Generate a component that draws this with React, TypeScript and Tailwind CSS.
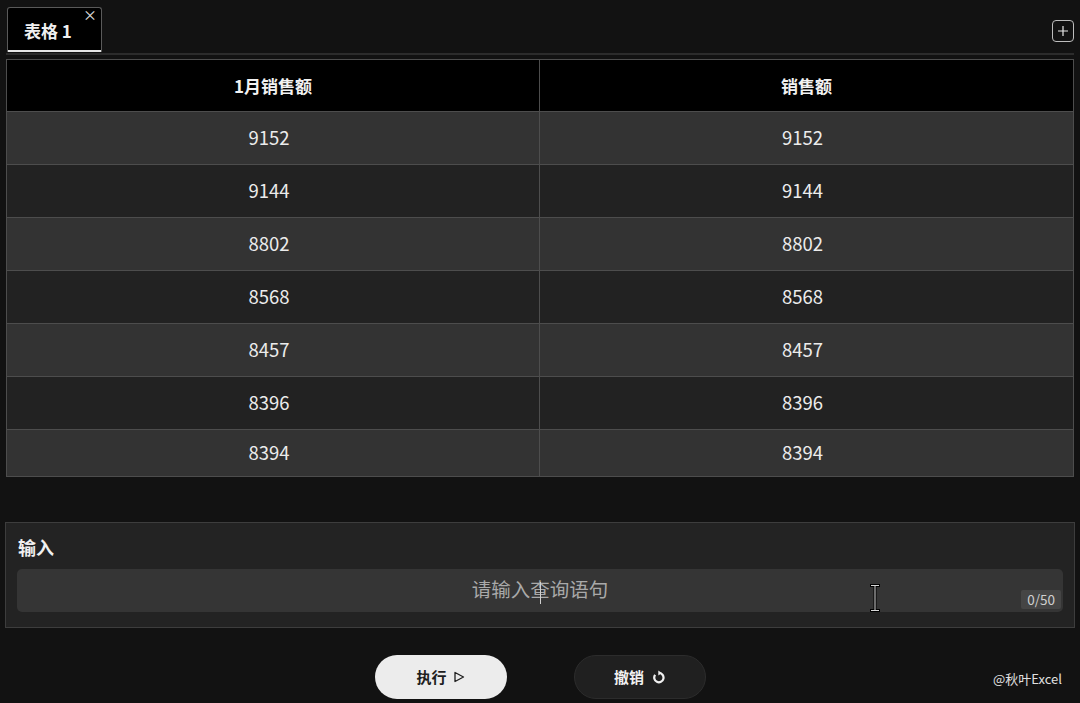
import React from "react";

const rows = [
  ["9152", "9152"],
  ["9144", "9144"],
  ["8802", "8802"],
  ["8568", "8568"],
  ["8457", "8457"],
  ["8396", "8396"],
  ["8394", "8394"],
];

const font = { fontFamily: '"Noto Sans CJK SC", "Noto Sans", sans-serif' };

export default function App() {
  return (
    <div
      className="w-[1080px] h-[703px] bg-[#121212] text-white overflow-hidden relative"
      style={font}
    >
      {/* Tab bar */}
      <div className="flex items-end justify-between pl-[7px] pr-[6px] pt-[7px]">
        <div className="relative w-[95px] h-[45px] bg-black border border-[#5a5a5a] border-b-0 rounded-t-[3px] flex items-center pl-[16px]">
          <span className="text-[17px] font-bold leading-none text-[#f0f0f0]">表格 1</span>
          <span className="absolute right-[4px] top-[-1px] text-[14px] leading-none text-[#e0e0e0]">×</span>
          <div className="absolute left-0 right-0 bottom-0 h-[2px] bg-[#e6e6e6]" />
        </div>
        <div className="mb-[10px] w-[22px] h-[22px] rounded-[4px] border border-[#bdbdbd] flex items-center justify-center">
          <svg width="12" height="12" viewBox="0 0 12 12">
            <path d="M6 1v10M1 6h10" stroke="#e8e8e8" strokeWidth="1.2" />
          </svg>
        </div>
      </div>
      <div className="mx-[6px] mt-[1px] h-[2px] bg-[#2c2c2c]" />

      {/* Table */}
      <div className="mx-[6px] mt-[4px] w-[1068px] border border-[#4d4d4d]">
        <div className="grid grid-cols-2 h-[52px] bg-black border-b border-[#4d4d4d]">
          <div className="flex items-center justify-center border-r border-[#4d4d4d] text-[17px] font-bold text-[#f2f2f2]">
            1月销售额
          </div>
          <div className="flex items-center justify-center text-[17px] font-bold text-[#f2f2f2]">
            销售额
          </div>
        </div>
        {rows.map((r, i) => {
          const last = i === rows.length - 1;
          const bg = i % 2 === 0 ? "bg-[#333333]" : "bg-[#222222]";
          return (
            <div
              key={i}
              className={`grid grid-cols-2 ${bg} ${last ? "h-[46px]" : "h-[53px] border-b border-[#4d4d4d]"}`}
            >
              <div className="flex items-center justify-center pr-[8px] border-r border-[#4d4d4d] text-[18.5px] text-[#ececec]">
                {r[0]}
              </div>
              <div className="flex items-center justify-center pr-[8px] text-[18.5px] text-[#ececec]">
                {r[1]}
              </div>
            </div>
          );
        })}
      </div>

      {/* Input panel */}
      <div className="mx-[5px] mt-[45px] h-[106px] bg-[#232323] border border-[#3d3d3d] px-[11px] pt-[12px]">
        <div className="text-[18px] font-bold leading-[24px] text-[#f0f0f0] pl-[1px]">输入</div>
        <div className="relative mt-[10px] h-[43px] bg-[#353535] rounded-[5px] flex items-center justify-center">
          <span className="text-[19.5px] text-[#a9a9a9] -mt-[4px]">请输入查询语句</span>
          <span className="absolute left-[523px] top-[13px] w-[1px] h-[22px] bg-[#d0d0d0]" />
          <span className="absolute right-[2px] bottom-[3px] bg-[#454545] px-[6px] h-[19px] flex items-center text-[13.5px] text-[#cfcfcf] rounded-[2px]">
            0/50
          </span>
          <svg className="absolute left-[852px] top-[15px]" width="12" height="28" viewBox="0 0 12 28">
            <path d="M1 1.5h10M1 26.5h10M6 2v24" stroke="#000" strokeWidth="3" />
            <path d="M2 1.5h8M2 26.5h8M6 2v24" stroke="#d8d8d8" strokeWidth="1" />
          </svg>
        </div>
      </div>

      {/* Buttons */}
      <div className="relative mt-[27px] flex justify-center gap-[67px]">
        <button className="w-[132px] h-[44px] rounded-full bg-[#ececec] text-[#1e1e1e] text-[15px] font-bold flex items-center justify-center gap-[6px]">
          <span>执行</span>
          <svg width="12" height="12" viewBox="0 0 12 12">
            <path d="M2 1.5 L10.5 6 L2 10.5 Z" fill="none" stroke="#1e1e1e" strokeWidth="1.3" strokeLinejoin="round" />
          </svg>
        </button>
        <button className="w-[132px] h-[44px] rounded-full bg-[#202020] border border-[#2c2c2c] text-[#f0f0f0] text-[15px] font-bold flex items-center justify-center gap-[8px]">
          <span>撤销</span>
          <svg width="13" height="14" viewBox="0 0 14 15">
            <path d="M3.4 5.2 A5 5 0 1 0 7.5 3.2" fill="none" stroke="#f0f0f0" strokeWidth="2.4" />
            <path d="M6.8 0.4 L10.6 3.2 L6.8 6 Z" fill="#f0f0f0" />
          </svg>
        </button>
        <span className="absolute right-[18px] top-[17px] text-[13px] text-[#e0e0e0] leading-none">@秋叶Excel</span>
      </div>
    </div>
  );
}
